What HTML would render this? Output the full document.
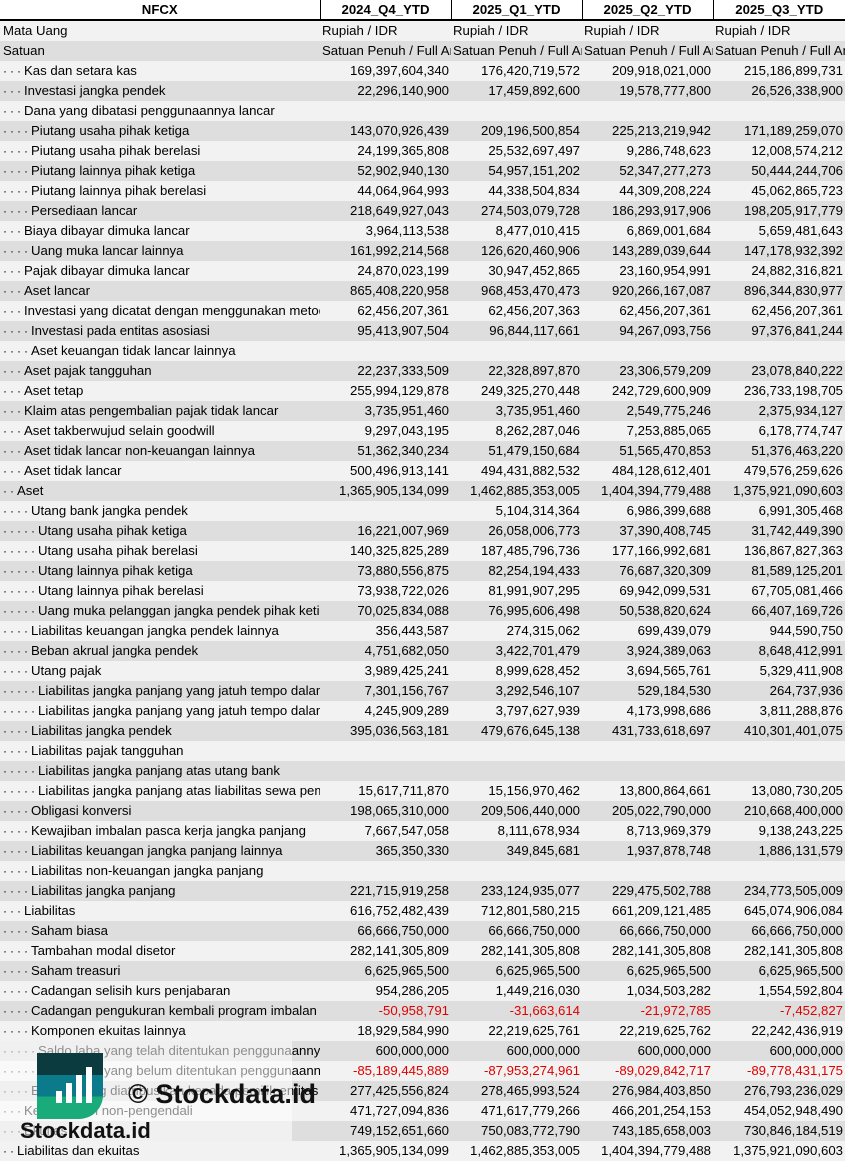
<!DOCTYPE html>
<html><head><meta charset="utf-8"><style>
*{margin:0;padding:0;box-sizing:border-box}
body{width:845px;height:1161px;overflow:hidden;background:#fff;font-family:"Liberation Sans",sans-serif;font-size:13.2px;color:#000;position:relative}
table{border-collapse:collapse;table-layout:fixed;width:845px}
td{height:20px;white-space:nowrap;overflow:hidden;padding:0 2px;line-height:20px}
td.n{text-align:right}
tr:nth-child(even) td{background:#f2f2f2}
tr:nth-child(odd) td{background:#dedede}
tr.h td{background:#fff;font-weight:bold;text-align:center;border-left:1px solid #000;border-bottom:2px solid #000;height:20px;line-height:18px}
tr.h td:first-child{border-left:none}
td.l{padding-left:3px}
.d{letter-spacing:3px;font-size:12px}
.r{color:#e00000}
.wm{position:absolute;left:0;top:1041px;width:292px;height:100px;background:rgba(255,255,255,.55)}
.logo{position:absolute;left:37px;top:1053px;width:66px;height:66px;border-radius:0 0 24px 0;overflow:hidden;background:linear-gradient(#0b3b3e 0 33%,#0b7a8a 33% 66%,#1aab7a 66%)}
.bar{position:absolute;bottom:16px;width:6px;background:#fff}
.t1{position:absolute;left:128px;top:1079px;font-weight:bold;font-size:27px;color:#111}
.t2{position:absolute;left:20px;top:1118px;font-weight:bold;font-size:22px;color:#111}
</style></head><body>
<table>
<colgroup><col style="width:320px"><col style="width:131px"><col style="width:131px"><col style="width:131px"><col style="width:132px"></colgroup>
<tr class="h"><td>NFCX</td><td>2024_Q4_YTD</td><td>2025_Q1_YTD</td><td>2025_Q2_YTD</td><td>2025_Q3_YTD</td></tr>
<tr><td class="l">Mata Uang</td><td>Rupiah / IDR</td><td>Rupiah / IDR</td><td>Rupiah / IDR</td><td>Rupiah / IDR</td></tr>
<tr><td class="l">Satuan</td><td>Satuan Penuh / Full Amount</td><td>Satuan Penuh / Full Amount</td><td>Satuan Penuh / Full Amount</td><td>Satuan Penuh / Full Amount</td></tr>
<tr><td class="l"><span class="d">···</span>Kas dan setara kas</td><td class="n">169,397,604,340</td><td class="n">176,420,719,572</td><td class="n">209,918,021,000</td><td class="n">215,186,899,731</td></tr>
<tr><td class="l"><span class="d">···</span>Investasi jangka pendek</td><td class="n">22,296,140,900</td><td class="n">17,459,892,600</td><td class="n">19,578,777,800</td><td class="n">26,526,338,900</td></tr>
<tr><td class="l"><span class="d">···</span>Dana yang dibatasi penggunaannya lancar</td><td></td><td></td><td></td><td></td></tr>
<tr><td class="l"><span class="d">····</span>Piutang usaha pihak ketiga</td><td class="n">143,070,926,439</td><td class="n">209,196,500,854</td><td class="n">225,213,219,942</td><td class="n">171,189,259,070</td></tr>
<tr><td class="l"><span class="d">····</span>Piutang usaha pihak berelasi</td><td class="n">24,199,365,808</td><td class="n">25,532,697,497</td><td class="n">9,286,748,623</td><td class="n">12,008,574,212</td></tr>
<tr><td class="l"><span class="d">····</span>Piutang lainnya pihak ketiga</td><td class="n">52,902,940,130</td><td class="n">54,957,151,202</td><td class="n">52,347,277,273</td><td class="n">50,444,244,706</td></tr>
<tr><td class="l"><span class="d">····</span>Piutang lainnya pihak berelasi</td><td class="n">44,064,964,993</td><td class="n">44,338,504,834</td><td class="n">44,309,208,224</td><td class="n">45,062,865,723</td></tr>
<tr><td class="l"><span class="d">····</span>Persediaan lancar</td><td class="n">218,649,927,043</td><td class="n">274,503,079,728</td><td class="n">186,293,917,906</td><td class="n">198,205,917,779</td></tr>
<tr><td class="l"><span class="d">···</span>Biaya dibayar dimuka lancar</td><td class="n">3,964,113,538</td><td class="n">8,477,010,415</td><td class="n">6,869,001,684</td><td class="n">5,659,481,643</td></tr>
<tr><td class="l"><span class="d">····</span>Uang muka lancar lainnya</td><td class="n">161,992,214,568</td><td class="n">126,620,460,906</td><td class="n">143,289,039,644</td><td class="n">147,178,932,392</td></tr>
<tr><td class="l"><span class="d">···</span>Pajak dibayar dimuka lancar</td><td class="n">24,870,023,199</td><td class="n">30,947,452,865</td><td class="n">23,160,954,991</td><td class="n">24,882,316,821</td></tr>
<tr><td class="l"><span class="d">···</span>Aset lancar</td><td class="n">865,408,220,958</td><td class="n">968,453,470,473</td><td class="n">920,266,167,087</td><td class="n">896,344,830,977</td></tr>
<tr><td class="l"><span class="d">···</span>Investasi yang dicatat dengan menggunakan metode ekuitas</td><td class="n">62,456,207,361</td><td class="n">62,456,207,363</td><td class="n">62,456,207,361</td><td class="n">62,456,207,361</td></tr>
<tr><td class="l"><span class="d">····</span>Investasi pada entitas asosiasi</td><td class="n">95,413,907,504</td><td class="n">96,844,117,661</td><td class="n">94,267,093,756</td><td class="n">97,376,841,244</td></tr>
<tr><td class="l"><span class="d">····</span>Aset keuangan tidak lancar lainnya</td><td></td><td></td><td></td><td></td></tr>
<tr><td class="l"><span class="d">···</span>Aset pajak tangguhan</td><td class="n">22,237,333,509</td><td class="n">22,328,897,870</td><td class="n">23,306,579,209</td><td class="n">23,078,840,222</td></tr>
<tr><td class="l"><span class="d">···</span>Aset tetap</td><td class="n">255,994,129,878</td><td class="n">249,325,270,448</td><td class="n">242,729,600,909</td><td class="n">236,733,198,705</td></tr>
<tr><td class="l"><span class="d">···</span>Klaim atas pengembalian pajak tidak lancar</td><td class="n">3,735,951,460</td><td class="n">3,735,951,460</td><td class="n">2,549,775,246</td><td class="n">2,375,934,127</td></tr>
<tr><td class="l"><span class="d">···</span>Aset takberwujud selain goodwill</td><td class="n">9,297,043,195</td><td class="n">8,262,287,046</td><td class="n">7,253,885,065</td><td class="n">6,178,774,747</td></tr>
<tr><td class="l"><span class="d">···</span>Aset tidak lancar non-keuangan lainnya</td><td class="n">51,362,340,234</td><td class="n">51,479,150,684</td><td class="n">51,565,470,853</td><td class="n">51,376,463,220</td></tr>
<tr><td class="l"><span class="d">···</span>Aset tidak lancar</td><td class="n">500,496,913,141</td><td class="n">494,431,882,532</td><td class="n">484,128,612,401</td><td class="n">479,576,259,626</td></tr>
<tr><td class="l"><span class="d">··</span>Aset</td><td class="n">1,365,905,134,099</td><td class="n">1,462,885,353,005</td><td class="n">1,404,394,779,488</td><td class="n">1,375,921,090,603</td></tr>
<tr><td class="l"><span class="d">····</span>Utang bank jangka pendek</td><td></td><td class="n">5,104,314,364</td><td class="n">6,986,399,688</td><td class="n">6,991,305,468</td></tr>
<tr><td class="l"><span class="d">·····</span>Utang usaha pihak ketiga</td><td class="n">16,221,007,969</td><td class="n">26,058,006,773</td><td class="n">37,390,408,745</td><td class="n">31,742,449,390</td></tr>
<tr><td class="l"><span class="d">·····</span>Utang usaha pihak berelasi</td><td class="n">140,325,825,289</td><td class="n">187,485,796,736</td><td class="n">177,166,992,681</td><td class="n">136,867,827,363</td></tr>
<tr><td class="l"><span class="d">·····</span>Utang lainnya pihak ketiga</td><td class="n">73,880,556,875</td><td class="n">82,254,194,433</td><td class="n">76,687,320,309</td><td class="n">81,589,125,201</td></tr>
<tr><td class="l"><span class="d">·····</span>Utang lainnya pihak berelasi</td><td class="n">73,938,722,026</td><td class="n">81,991,907,295</td><td class="n">69,942,099,531</td><td class="n">67,705,081,466</td></tr>
<tr><td class="l"><span class="d">·····</span>Uang muka pelanggan jangka pendek pihak ketiga</td><td class="n">70,025,834,088</td><td class="n">76,995,606,498</td><td class="n">50,538,820,624</td><td class="n">66,407,169,726</td></tr>
<tr><td class="l"><span class="d">····</span>Liabilitas keuangan jangka pendek lainnya</td><td class="n">356,443,587</td><td class="n">274,315,062</td><td class="n">699,439,079</td><td class="n">944,590,750</td></tr>
<tr><td class="l"><span class="d">····</span>Beban akrual jangka pendek</td><td class="n">4,751,682,050</td><td class="n">3,422,701,479</td><td class="n">3,924,389,063</td><td class="n">8,648,412,991</td></tr>
<tr><td class="l"><span class="d">····</span>Utang pajak</td><td class="n">3,989,425,241</td><td class="n">8,999,628,452</td><td class="n">3,694,565,761</td><td class="n">5,329,411,908</td></tr>
<tr><td class="l"><span class="d">·····</span>Liabilitas jangka panjang yang jatuh tempo dalam</td><td class="n">7,301,156,767</td><td class="n">3,292,546,107</td><td class="n">529,184,530</td><td class="n">264,737,936</td></tr>
<tr><td class="l"><span class="d">·····</span>Liabilitas jangka panjang yang jatuh tempo dalam</td><td class="n">4,245,909,289</td><td class="n">3,797,627,939</td><td class="n">4,173,998,686</td><td class="n">3,811,288,876</td></tr>
<tr><td class="l"><span class="d">····</span>Liabilitas jangka pendek</td><td class="n">395,036,563,181</td><td class="n">479,676,645,138</td><td class="n">431,733,618,697</td><td class="n">410,301,401,075</td></tr>
<tr><td class="l"><span class="d">····</span>Liabilitas pajak tangguhan</td><td></td><td></td><td></td><td></td></tr>
<tr><td class="l"><span class="d">·····</span>Liabilitas jangka panjang atas utang bank</td><td></td><td></td><td></td><td></td></tr>
<tr><td class="l"><span class="d">·····</span>Liabilitas jangka panjang atas liabilitas sewa pembiayaan</td><td class="n">15,617,711,870</td><td class="n">15,156,970,462</td><td class="n">13,800,864,661</td><td class="n">13,080,730,205</td></tr>
<tr><td class="l"><span class="d">····</span>Obligasi konversi</td><td class="n">198,065,310,000</td><td class="n">209,506,440,000</td><td class="n">205,022,790,000</td><td class="n">210,668,400,000</td></tr>
<tr><td class="l"><span class="d">····</span>Kewajiban imbalan pasca kerja jangka panjang</td><td class="n">7,667,547,058</td><td class="n">8,111,678,934</td><td class="n">8,713,969,379</td><td class="n">9,138,243,225</td></tr>
<tr><td class="l"><span class="d">····</span>Liabilitas keuangan jangka panjang lainnya</td><td class="n">365,350,330</td><td class="n">349,845,681</td><td class="n">1,937,878,748</td><td class="n">1,886,131,579</td></tr>
<tr><td class="l"><span class="d">····</span>Liabilitas non-keuangan jangka panjang</td><td></td><td></td><td></td><td></td></tr>
<tr><td class="l"><span class="d">····</span>Liabilitas jangka panjang</td><td class="n">221,715,919,258</td><td class="n">233,124,935,077</td><td class="n">229,475,502,788</td><td class="n">234,773,505,009</td></tr>
<tr><td class="l"><span class="d">···</span>Liabilitas</td><td class="n">616,752,482,439</td><td class="n">712,801,580,215</td><td class="n">661,209,121,485</td><td class="n">645,074,906,084</td></tr>
<tr><td class="l"><span class="d">····</span>Saham biasa</td><td class="n">66,666,750,000</td><td class="n">66,666,750,000</td><td class="n">66,666,750,000</td><td class="n">66,666,750,000</td></tr>
<tr><td class="l"><span class="d">····</span>Tambahan modal disetor</td><td class="n">282,141,305,809</td><td class="n">282,141,305,808</td><td class="n">282,141,305,808</td><td class="n">282,141,305,808</td></tr>
<tr><td class="l"><span class="d">····</span>Saham treasuri</td><td class="n">6,625,965,500</td><td class="n">6,625,965,500</td><td class="n">6,625,965,500</td><td class="n">6,625,965,500</td></tr>
<tr><td class="l"><span class="d">····</span>Cadangan selisih kurs penjabaran</td><td class="n">954,286,205</td><td class="n">1,449,216,030</td><td class="n">1,034,503,282</td><td class="n">1,554,592,804</td></tr>
<tr><td class="l"><span class="d">····</span>Cadangan pengukuran kembali program imbalan</td><td class="n r">-50,958,791</td><td class="n r">-31,663,614</td><td class="n r">-21,972,785</td><td class="n r">-7,452,827</td></tr>
<tr><td class="l"><span class="d">····</span>Komponen ekuitas lainnya</td><td class="n">18,929,584,990</td><td class="n">22,219,625,761</td><td class="n">22,219,625,762</td><td class="n">22,242,436,919</td></tr>
<tr><td class="l"><span class="d">·····</span>Saldo laba yang telah ditentukan penggunaannya</td><td class="n">600,000,000</td><td class="n">600,000,000</td><td class="n">600,000,000</td><td class="n">600,000,000</td></tr>
<tr><td class="l"><span class="d">·····</span>Saldo laba yang belum ditentukan penggunaannya</td><td class="n r">-85,189,445,889</td><td class="n r">-87,953,274,961</td><td class="n r">-89,029,842,717</td><td class="n r">-89,778,431,175</td></tr>
<tr><td class="l"><span class="d">····</span>Ekuitas yang diatribusikan kepada pemilik entitas induk</td><td class="n">277,425,556,824</td><td class="n">278,465,993,524</td><td class="n">276,984,403,850</td><td class="n">276,793,236,029</td></tr>
<tr><td class="l"><span class="d">···</span>Kepentingan non-pengendali</td><td class="n">471,727,094,836</td><td class="n">471,617,779,266</td><td class="n">466,201,254,153</td><td class="n">454,052,948,490</td></tr>
<tr><td class="l"><span class="d">···</span>Ekuitas</td><td class="n">749,152,651,660</td><td class="n">750,083,772,790</td><td class="n">743,185,658,003</td><td class="n">730,846,184,519</td></tr>
<tr><td class="l"><span class="d">··</span>Liabilitas dan ekuitas</td><td class="n">1,365,905,134,099</td><td class="n">1,462,885,353,005</td><td class="n">1,404,394,779,488</td><td class="n">1,375,921,090,603</td></tr>
</table>
<div class="wm"></div>
<div class="logo">
<div class="bar" style="left:19px;height:12px"></div>
<div class="bar" style="left:29px;height:20px"></div>
<div class="bar" style="left:39px;height:28px"></div>
<div class="bar" style="left:49px;height:36px"></div>
</div>
<div class="t1">© Stockdata.id</div>
<div class="t2">Stockdata.id</div>
</body></html>
